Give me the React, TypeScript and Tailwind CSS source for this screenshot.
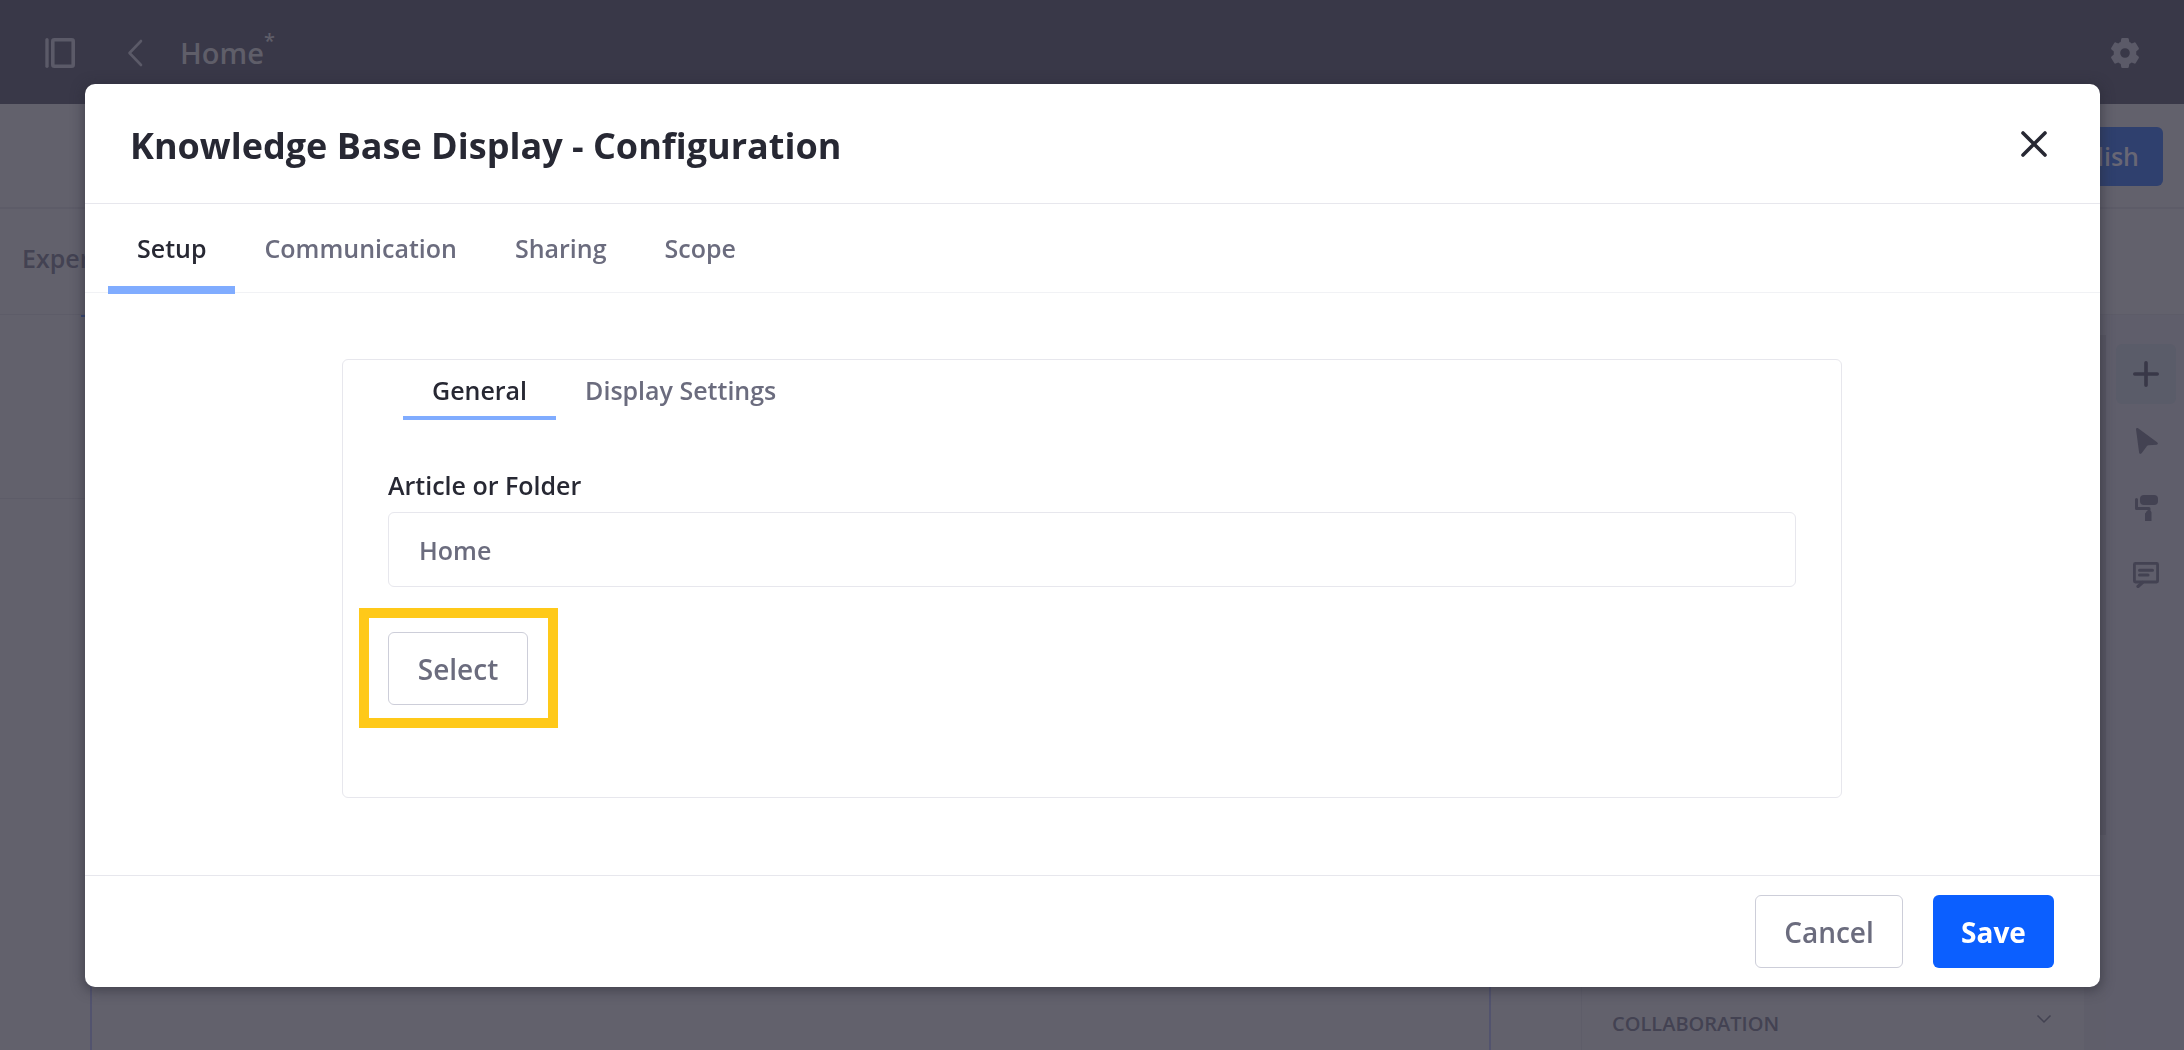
import { useState } from 'react';

const settingTabs = ['Setup', 'Communication', 'Sharing', 'Scope'];
const displayTabs = ['General', 'Display Settings'];

function PanelIcon() {
  return (
    <svg width="30" height="30" viewBox="0 0 30 30" fill="none" stroke="currentColor">
      <path d="M2 1.8v26.4" strokeWidth="3.4" strokeLinecap="round" />
      <rect x="7.8" y="1.8" width="20.4" height="26.4" rx="1.5" strokeWidth="3.6" />
    </svg>
  );
}

function BackIcon() {
  return (
    <svg width="16" height="28" viewBox="0 0 16 28" fill="none" stroke="currentColor" strokeWidth="2.6" strokeLinecap="round" strokeLinejoin="round">
      <path d="M14 2 2.5 14 14 26" />
    </svg>
  );
}

function GearIcon() {
  return (
    <svg width="30" height="30" viewBox="0 0 30 30" fill="currentColor">
      <path
        fillRule="evenodd"
        d="M12.4 0h5.2c.7 0 1.1.4 1.2 1.1l.5 2.9c.9.4 1.7.8 2.4 1.4l2.6-1c.6-.2 1.2 0 1.5.6l3 5c.3.6.2 1.2-.3 1.6l-2.3 1.8c.1 1.1.1 2.1 0 3.2l2.3 1.8c.5.4.6 1 .3 1.6l-3 5c-.3.6-.9.8-1.5.6l-2.6-1c-.7.6-1.5 1-2.4 1.4l-.5 2.9c-.1.7-.5 1.1-1.2 1.1h-5.2c-.7 0-1.1-.4-1.2-1.1l-.5-2.9c-.9-.4-1.7-.8-2.4-1.4l-2.6 1c-.6.2-1.2 0-1.5-.6l-3-5c-.3-.6-.2-1.2.3-1.6l2.3-1.8c-.1-1.1-.1-2.1 0-3.2L1.5 11.6c-.5-.4-.6-1-.3-1.6l3-5c.3-.6.9-.8 1.5-.6l2.6 1c.7-.6 1.5-1 2.4-1.4l.5-2.9C11.3.4 11.7 0 12.4 0ZM15 10.2a4.8 4.8 0 1 0 0 9.6 4.8 4.8 0 0 0 0-9.6Z"
      />
    </svg>
  );
}

function PlusIcon() {
  return (
    <svg width="26" height="26" viewBox="0 0 26 26" fill="none" stroke="currentColor" strokeWidth="3.6" strokeLinecap="round">
      <path d="M13 1.8v22.4M1.8 13h22.4" />
    </svg>
  );
}

function CursorIcon() {
  return (
    <svg width="26" height="26" viewBox="0 0 26 26" fill="currentColor">
      <path d="M3 1.3C3 .2 4.2-.3 5.1.3l19 14c1.3 1 .8 2.3-.6 2.4l-8 .6c-.7 0-1.1.3-1.5.8l-5.2 7c-.9 1.3-2.6 1-2.7-.5L3 1.3Z" />
    </svg>
  );
}

function RollerIcon() {
  return (
    <svg width="26" height="26" viewBox="0 0 26 26" fill="currentColor">
      <rect x="7" y="0" width="18" height="10" rx="4" />
      <path d="M3.5 4.5v9H16v4" fill="none" stroke="currentColor" strokeWidth="3" strokeLinecap="round" strokeLinejoin="round" />
      <path d="M13 17.5c0-.8.7-1.5 1.5-1.5H17c.8 0 1.5.7 1.5 1.5V26H12v-7.5Z" />
    </svg>
  );
}

function CommentIcon() {
  return (
    <svg width="26" height="26" viewBox="0 0 26 26" fill="none" stroke="currentColor" strokeLinecap="round" strokeLinejoin="round">
      <rect x="1.4" y="1.4" width="23.2" height="18.6" rx="1" strokeWidth="2.8" />
      <path d="M6.5 8.3h13M6.5 13H15" strokeWidth="3" />
      <path d="M9.5 20.500 5 24.500" strokeWidth="3.2" />
    </svg>
  );
}

const railTools = [
  { label: 'Add', icon: <PlusIcon />, active: true },
  { label: 'Selection', icon: <CursorIcon />, active: false },
  { label: 'Page design', icon: <RollerIcon />, active: false },
  { label: 'Comments', icon: <CommentIcon />, active: false },
];

function Editor() {
  return (
    <div className="flex h-screen flex-col overflow-hidden bg-[#62616c] text-[#434252]">
      <header className="flex h-[104px] shrink-0 items-center bg-[#393848] pt-0.5 pr-[44px] pl-[45px] text-[#5b5a68]">
        <button aria-label="Toggle product menu"><PanelIcon /></button>
        <button aria-label="Back" className="ml-[52px]"><BackIcon /></button>
        <h1 className="ml-[37px] flex text-[29px] font-semibold text-[#5f5e69]">
          Home<sup className="top-0 -mt-1 text-[20px] leading-7">*</sup>
        </h1>
        <button aria-label="Settings" className="ml-auto"><GearIcon /></button>
      </header>

      <div className="flex h-[105px] shrink-0 items-center justify-end border-b-2 border-[#5d5c68] pt-0.5 pr-[21px]">
        <button className="h-[59px] rounded-md bg-[#2f406e] px-[24px] text-[25px] font-semibold text-[#686775]">Publish</button>
      </div>

      <div className="flex h-[106px] shrink-0 items-center border-b border-[#5d5c68] pb-1.5 pl-[22px] text-[25px] font-semibold">
        Exper
      </div>

      <div className="flex min-h-0 flex-1">
        <main className="flex min-w-0 flex-1 flex-col">
          <div className="h-[184px] shrink-0 border-b border-[#5d5c68] pl-[81px]">
            <div className="h-0.5 bg-[#344574]" />
          </div>
          <div className="mr-[90px] ml-[90px] flex-1 border-x-2 border-[#52536e]" />
        </main>
        <aside className="flex w-[503px] shrink-0 flex-col border-l border-[#5e5d69]">
          <button className="mt-auto flex h-[52px] items-center justify-between pr-[32px] pl-[30px] text-[20px] font-semibold">
            COLLABORATION
            <svg width="16" height="10" viewBox="0 0 16 10" fill="none" stroke="currentColor" strokeWidth="1.5" className="mb-2.5">
              <path d="m1.5 1.5 6.500 6.500 6.500-6.500" />
            </svg>
          </button>
        </aside>
        <div className="w-[22px] shrink-0 bg-[#5f5e6a] pt-[20px]">
          <div className="h-[500px] bg-[#595864]" />
        </div>
        <nav className="flex w-[78px] shrink-0 flex-col items-center gap-[7px] bg-[#5f5e6b] pt-[29px] pl-0.5">
          {railTools.map((tool) => (
            <button
              key={tool.label}
              aria-label={tool.label}
              className={`flex size-[60px] items-center justify-center rounded-md ${tool.active ? 'bg-[#5a5c69] text-[#393848]' : ''}`}
            >
              {tool.icon}
            </button>
          ))}
        </nav>
      </div>
    </div>
  );
}

function ConfigurationModal() {
  const [setting, setSetting] = useState('Setup');
  const [display, setDisplay] = useState('General');

  return (
    <section
      role="dialog"
      aria-labelledby="dialog-title"
      className="w-full rounded-[10px] bg-white text-[#272833] shadow-[0_2px_12px_2px_rgba(39,40,51,0.5)]"
    >
      <header className="flex h-[120px] items-center justify-between border-b border-[#e7e7ed] pr-[46px] pl-[45px]">
        <h2 id="dialog-title" className="pt-1 text-[36px] font-bold">Knowledge Base Display - Configuration</h2>
        <button aria-label="Close" className="flex size-10 items-center justify-center">
          <svg width="26" height="26" viewBox="0 0 26 26" fill="none" stroke="currentColor" strokeWidth="3.6" strokeLinecap="round">
            <path d="m2 2 22 22M24 2 2 24" />
          </svg>
        </button>
      </header>

      <div role="tablist" className="flex h-[89px] border-b border-[#f1f2f5] pl-[23px] text-[25px] font-semibold">
        {settingTabs.map((tab) => (
          <button
            key={tab}
            role="tab"
            aria-selected={tab === setting}
            onClick={() => setSetting(tab)}
            className={`h-[90px] border-b-8 px-[29px] pt-2 ${tab === setting ? 'border-[#80acff]' : 'border-transparent text-[#6b6c7e]'}`}
          >
            {tab}
          </button>
        ))}
      </div>

      <div className="pt-[66px] pr-[46px] pb-[77px] pl-[45px]">
        <div className="mx-auto max-w-[1500px] rounded-md border border-[#e7e7ed] px-[45px] pb-[92px]">
          <div role="tablist" className="ml-[15px] flex text-[25px] font-semibold">
            {displayTabs.map((tab) => (
              <button
                key={tab}
                role="tab"
                aria-selected={tab === display}
                onClick={() => setDisplay(tab)}
                className={`h-[60px] border-b-4 px-[29px] pt-1.5 ${tab === display ? 'border-[#80acff]' : 'border-transparent text-[#6b6c7e]'}`}
              >
                {tab}
              </button>
            ))}
          </div>
          <label htmlFor="article" className="mt-[47px] mb-[9px] block text-[25px] leading-9 font-semibold">
            Article or Folder
          </label>
          <input
            id="article"
            readOnly
            value="Home"
            className="block h-[75px] w-full rounded-md border border-[#e7e7ed] bg-white px-[30px] text-[25px] font-semibold text-[#6b6c7e]"
          />
          <div className="relative mt-[45px] w-fit">
            <button className="block h-[73px] w-[140px] rounded-md border border-[#cdced9] text-[28px] font-semibold text-[#6b6c7e]">
              Select
            </button>
            <div className="pointer-events-none absolute -top-6 -right-[30px] -bottom-[23px] -left-[29px] border-10 border-[#ffc919]" />
          </div>
        </div>
      </div>

      <footer className="flex justify-end gap-[30px] border-t border-[#e7e7ed] py-[19px] pr-[46px]">
        <button className="h-[73px] w-[148px] rounded-md border border-[#cdced9] text-[28px] font-semibold text-[#6b6c7e]">Cancel</button>
        <button className="h-[73px] w-[121px] rounded-md bg-[#0b5fff] text-[28px] font-bold text-white">Save</button>
      </footer>
    </section>
  );
}

export default function App() {
  return (
    <div className="font-['Open_Sans','Noto_Sans',sans-serif]">
      <Editor />
      <div className="fixed inset-0 flex items-start pt-[84px] pr-[84px] pl-[85px]">
        <ConfigurationModal />
      </div>
    </div>
  );
}
